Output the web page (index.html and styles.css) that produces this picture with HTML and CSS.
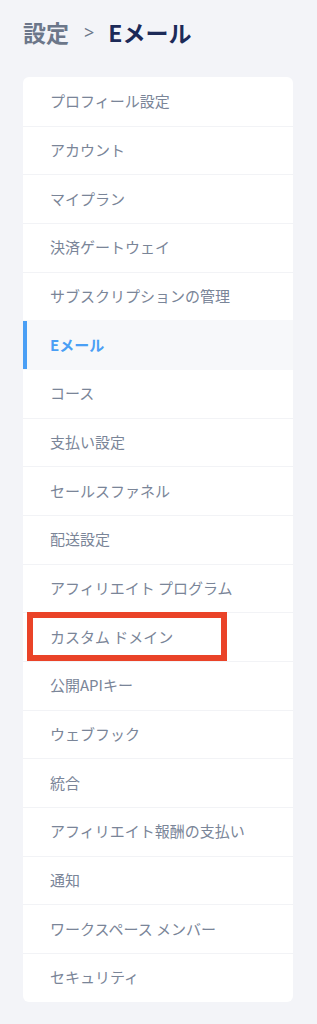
FILE: index.html
```html
<!DOCTYPE html>
<html lang="ja">
<head>
<meta charset="utf-8">
<link rel="stylesheet" href="styles.css">
</head>
<body>
<div class="page">
  <h1 class="crumbs"><span class="crumb-parent">設定</span><span class="crumb-sep">&gt;</span><span class="crumb-current">Eメール</span></h1>
  <nav class="menu">
    <div class="item">プロフィール設定</div>
    <div class="item">アカウント</div>
    <div class="item">マイプラン</div>
    <div class="item">決済ゲートウェイ</div>
    <div class="item">サブスクリプションの管理</div>
    <div class="item active">Eメール</div>
    <div class="item">コース</div>
    <div class="item">支払い設定</div>
    <div class="item">セールスファネル</div>
    <div class="item">配送設定</div>
    <div class="item">アフィリエイト プログラム</div>
    <div class="item marked">カスタム ドメイン<span class="highlight"></span></div>
    <div class="item">公開APIキー</div>
    <div class="item">ウェブフック</div>
    <div class="item">統合</div>
    <div class="item">アフィリエイト報酬の支払い</div>
    <div class="item">通知</div>
    <div class="item">ワークスペース メンバー</div>
    <div class="item">セキュリティ</div>
  </nav>
</div>
</body>
</html>
```
FILE: styles.css
```css
html, body {
  margin: 0;
  padding: 0;
  background: #f3f4f8;
}
body {
  font-family: "Noto Sans CJK JP", "Noto Sans", sans-serif;
}
.page {
  padding: 17px 24px 0 23px;
}
.crumbs {
  margin: 0;
  display: flex;
  align-items: center;
  font-size: 23px;
  line-height: 30px;
  font-weight: 700;
  height: 30px;
}
.crumb-parent {
  color: #6c778a;
}
.crumb-sep {
  color: #6c778a;
  font-weight: 400;
  font-size: 18px;
  margin: 0 14px 0 15px;
  font-family: "Noto Sans", sans-serif;
}
.crumb-current {
  color: #1c2a58;
}
.menu {
  margin-top: 30px;
  background: #ffffff;
  border-radius: 6px;
  overflow: hidden;
  display: flex;
  flex-direction: column;
  width: 270px;
}
.item {
  position: relative;
  box-sizing: border-box;
  height: 48.68px;
  display: flex;
  align-items: center;
  padding-left: 27px;
  padding-bottom: 2px;
  font-size: 15px;
  color: #7a8598;
  border-top: 1px solid #f2f3f6;
  white-space: nowrap;
}
.item:first-child {
  border-top: none;
}
.item.active {
  background: #f7f8fa;
  color: #4a9ff5;
  font-weight: 700;
  box-shadow: inset 4px 0 0 #4a9ff5;
  border-top-color: #f7f8fa;
}
.item.active + .item {
  border-top-color: #f7f8fa;
}
.highlight {
  position: absolute;
  left: 4px;
  top: -1px;
  width: 200px;
  height: 49px;
  box-sizing: border-box;
  border: 6px solid #ea4328;
}
```
